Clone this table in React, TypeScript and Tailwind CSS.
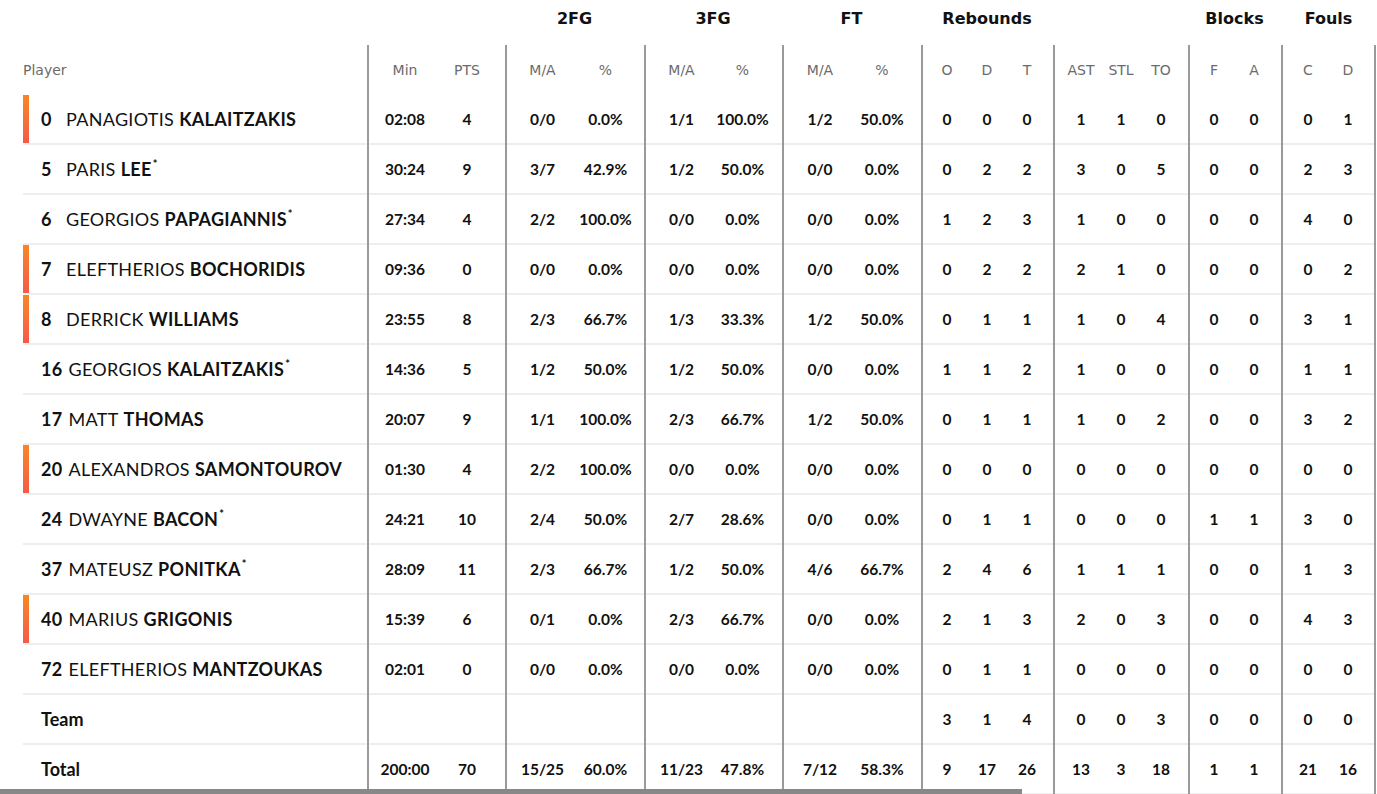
import React from "react";

type Row = {
  num?: string;
  first?: string;
  last?: string;
  star?: boolean;
  bar?: boolean;
  label?: string;
  s: string[];
};

const rows: Row[] = [
  { num: "0", first: "PANAGIOTIS", last: "KALAITZAKIS", bar: true, s: "02:08 4 0/0 0.0% 1/1 100.0% 1/2 50.0% 0 0 0 1 1 0 0 0 0 1".split(" ") },
  { num: "5", first: "PARIS", last: "LEE", star: true, s: "30:24 9 3/7 42.9% 1/2 50.0% 0/0 0.0% 0 2 2 3 0 5 0 0 2 3".split(" ") },
  { num: "6", first: "GEORGIOS", last: "PAPAGIANNIS", star: true, s: "27:34 4 2/2 100.0% 0/0 0.0% 0/0 0.0% 1 2 3 1 0 0 0 0 4 0".split(" ") },
  { num: "7", first: "ELEFTHERIOS", last: "BOCHORIDIS", bar: true, s: "09:36 0 0/0 0.0% 0/0 0.0% 0/0 0.0% 0 2 2 2 1 0 0 0 0 2".split(" ") },
  { num: "8", first: "DERRICK", last: "WILLIAMS", bar: true, s: "23:55 8 2/3 66.7% 1/3 33.3% 1/2 50.0% 0 1 1 1 0 4 0 0 3 1".split(" ") },
  { num: "16", first: "GEORGIOS", last: "KALAITZAKIS", star: true, s: "14:36 5 1/2 50.0% 1/2 50.0% 0/0 0.0% 1 1 2 1 0 0 0 0 1 1".split(" ") },
  { num: "17", first: "MATT", last: "THOMAS", s: "20:07 9 1/1 100.0% 2/3 66.7% 1/2 50.0% 0 1 1 1 0 2 0 0 3 2".split(" ") },
  { num: "20", first: "ALEXANDROS", last: "SAMONTOUROV", bar: true, s: "01:30 4 2/2 100.0% 0/0 0.0% 0/0 0.0% 0 0 0 0 0 0 0 0 0 0".split(" ") },
  { num: "24", first: "DWAYNE", last: "BACON", star: true, s: "24:21 10 2/4 50.0% 2/7 28.6% 0/0 0.0% 0 1 1 0 0 0 1 1 3 0".split(" ") },
  { num: "37", first: "MATEUSZ", last: "PONITKA", star: true, s: "28:09 11 2/3 66.7% 1/2 50.0% 4/6 66.7% 2 4 6 1 1 1 0 0 1 3".split(" ") },
  { num: "40", first: "MARIUS", last: "GRIGONIS", bar: true, s: "15:39 6 0/1 0.0% 2/3 66.7% 0/0 0.0% 2 1 3 2 0 3 0 0 4 3".split(" ") },
  { num: "72", first: "ELEFTHERIOS", last: "MANTZOUKAS", s: "02:01 0 0/0 0.0% 0/0 0.0% 0/0 0.0% 0 1 1 0 0 0 0 0 0 0".split(" ") },
  { label: "Team", s: ["", "", "", "", "", "", "", "", "3", "1", "4", "0", "0", "3", "0", "0", "0", "0"] },
  { label: "Total", s: "200:00 70 15/25 60.0% 11/23 47.8% 7/12 58.3% 9 17 26 13 3 18 1 1 21 16".split(" ") },
];

type Group = {
  title: string;
  w: string;
  pad: string;
  cell: string;
  heads: string[];
  start: number;
  last?: boolean;
};

const groups: Group[] = [
  { title: "", w: "w-[138px]", pad: "pl-[5px]", cell: "w-[62px]", heads: ["Min", "PTS"], start: 0 },
  { title: "2FG", w: "w-[139px]", pad: "pl-[4px]", cell: "w-[63px]", heads: ["M/A", "%"], start: 2 },
  { title: "3FG", w: "w-[138px]", pad: "pl-[5px]", cell: "w-[61px]", heads: ["M/A", "%"], start: 4 },
  { title: "FT", w: "w-[139px]", pad: "pl-[5px]", cell: "w-[62px]", heads: ["M/A", "%"], start: 6 },
  { title: "Rebounds", w: "w-[132px]", pad: "pl-[4px]", cell: "w-[40px]", heads: ["O", "D", "T"], start: 8 },
  { title: "", w: "w-[135px]", pad: "pl-[6px]", cell: "w-[40px]", heads: ["AST", "STL", "TO"], start: 11 },
  { title: "Blocks", w: "w-[93px]", pad: "pl-[4px]", cell: "w-[40px]", heads: ["F", "A"], start: 14 },
  { title: "Fouls", w: "w-[95px]", pad: "pl-[5px]", cell: "w-[40px]", heads: ["C", "D"], start: 16, last: true },
];

const dejavu = { fontFamily: "'DejaVu Sans', Arial, sans-serif" };
const lato = { fontFamily: "Lato, 'Open Sans', Arial, sans-serif" };

function PlayerCell({ r }: { r: Row }) {
  return (
    <div className="flex h-[50px] items-center border-b-2 border-[#eeeeee]">
      <div
        className={
          r.bar
            ? "h-[48px] w-[6px] shrink-0 bg-gradient-to-b from-[#f7861f] to-[#f45a48]"
            : "h-[48px] w-[6px] shrink-0"
        }
      />
      <div className="ml-[12px] flex items-center pt-[1px] text-[18px] tracking-[0.3px] text-[#111111]" style={lato}>
        {r.label ? (
          <span className="font-bold tracking-normal">{r.label}</span>
        ) : (
          <>
            <span className="mr-[6px] inline-block min-w-[19px] font-bold">{r.num}</span>
            <span className="font-normal">{r.first}</span>
            <span className="ml-[5px] font-bold">{r.last}</span>
            {r.star && <span className="relative -top-[5px] ml-[1px] text-[11px] font-bold">*</span>}
          </>
        )}
      </div>
    </div>
  );
}

export default function App() {
  return (
    <div className="min-h-[794px] bg-white pl-[23px] text-[#111111]" style={dejavu}>
      <div className="flex h-[45px] items-center pb-[8px]">
        <div className="w-[344px]" />
        {groups.map((g, i) => (
          <div key={i} className={`${g.w} text-center text-[16px] font-bold text-[#111111]`}>
            {g.title}
          </div>
        ))}
      </div>
      <div className="flex">
        <div className="flex w-[344px] flex-col">
          <div className="flex h-[50px] items-center text-[14px] text-[#6b6b6b]">Player</div>
          {rows.map((r, i) => (
            <PlayerCell key={i} r={r} />
          ))}
        </div>
        {groups.map((g, gi) => (
          <div
            key={gi}
            className={`${g.w} flex flex-col border-l-2 border-[#9a9a9a] ${g.last ? "border-r-2" : ""}`}
          >
            <div className={`flex h-[50px] items-center ${g.pad} text-[14px] text-[#6b6b6b]`}>
              {g.heads.map((h, hi) => (
                <div key={hi} className={`${g.cell} text-center`}>
                  {h}
                </div>
              ))}
            </div>
            {rows.map((r, ri) => (
              <div
                key={ri}
                className={`flex h-[50px] items-center border-b-2 border-[#eeeeee] ${g.pad} pt-[2px] text-[15.5px] font-bold`}
                style={lato}
              >
                {g.heads.map((_, hi) => (
                  <div key={hi} className={`${g.cell} whitespace-nowrap text-center`}>
                    {r.s[g.start + hi]}
                  </div>
                ))}
              </div>
            ))}
          </div>
        ))}
      </div>
      <div className="fixed bottom-0 left-0 h-[5px] w-[1022px] bg-[#888888]" />
    </div>
  );
}
